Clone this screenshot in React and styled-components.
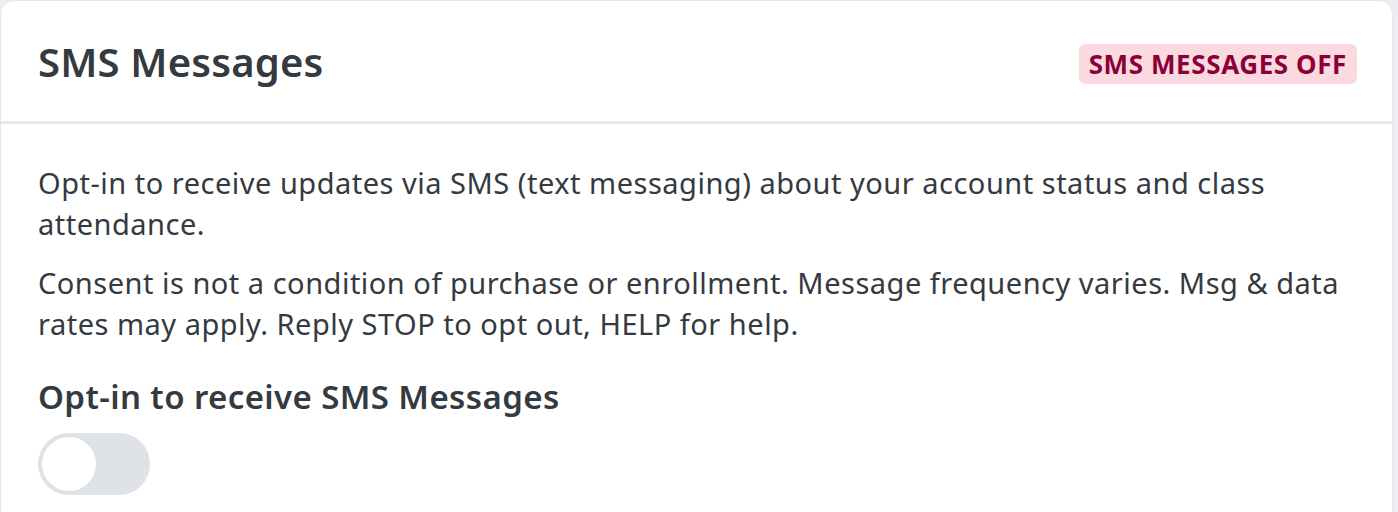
import React from "react";
import styled, { createGlobalStyle } from "styled-components";

const GlobalStyle = createGlobalStyle`
  html, body {
    margin: 0;
    padding: 0;
    background: #eceef1;
  }
  body {
    font-family: "Noto Sans", "Open Sans", Arial, sans-serif;
    color: #343a40;
  }
`;

const Page = styled.div`
  padding: 0 5px 0 0;
`;

const Card = styled.section`
  background: #ffffff;
  border: 1px solid #e4e7eb;
  border-radius: 14px 14px 0 0;
  min-height: 540px;
`;

const Header = styled.header`
  display: flex;
  align-items: center;
  justify-content: space-between;
  height: 120px;
  padding: 0 35px 0 37px;
  border-bottom: 3px solid #e6e8eb;
`;

const Title = styled.h2`
  margin: 0;
  font-size: 40px;
  font-weight: 600;
  color: #343a40;
  letter-spacing: 0.2px;
`;

const Badge = styled.span`
  display: inline-flex;
  align-items: center;
  height: 40px;
  margin-top: 6px;
  padding: 0 10px;
  border-radius: 6px;
  background: ${(p) => (p.$on ? "#d4f2e1" : "#fad9df")};
  color: ${(p) => (p.$on ? "#0c6b3a" : "#8c0039")};
  font-size: 26px;
  font-weight: 700;
  letter-spacing: 0.6px;
  text-transform: uppercase;
`;

const Body = styled.div`
  padding: 38px 37px 40px;
`;

const Paragraph = styled.p`
  margin: 0 0 18px;
  font-size: 29px;
  line-height: 41px;
  letter-spacing: 0.5px;
  color: #343a40;
`;

const Label = styled.h3`
  margin: 31px 0 14px;
  font-size: 33px;
  line-height: 44px;
  font-weight: 600;
  letter-spacing: 0.4px;
  color: #343a40;
`;

const Track = styled.button`
  display: flex;
  align-items: center;
  width: 112px;
  height: 62px;
  padding: 0 4px;
  border: none;
  border-radius: 31px;
  background: ${(p) => (p.$on ? "#2563eb" : "#dfe2e6")};
  justify-content: ${(p) => (p.$on ? "flex-end" : "flex-start")};
  cursor: pointer;
`;

const Knob = styled.span`
  width: 54px;
  height: 54px;
  border-radius: 50%;
  background: #ffffff;
`;

export default function App() {
  const [on, setOn] = React.useState(false);
  return (
    <Page>
      <GlobalStyle />
      <Card>
        <Header>
          <Title>SMS Messages</Title>
          <Badge $on={on}>{on ? "SMS Messages On" : "SMS Messages Off"}</Badge>
        </Header>
        <Body>
          <Paragraph>
            Opt-in to receive updates via SMS (text messaging) about your account status and class
            attendance.
          </Paragraph>
          <Paragraph>
            Consent is not a condition of purchase or enrollment. Message frequency varies. Msg &amp; data
            rates may apply. Reply STOP to opt out, HELP for help.
          </Paragraph>
          <Label>Opt-in to receive SMS Messages</Label>
          <Track $on={on} onClick={() => setOn(!on)} aria-label="Toggle SMS messages">
            <Knob />
          </Track>
        </Body>
      </Card>
    </Page>
  );
}
